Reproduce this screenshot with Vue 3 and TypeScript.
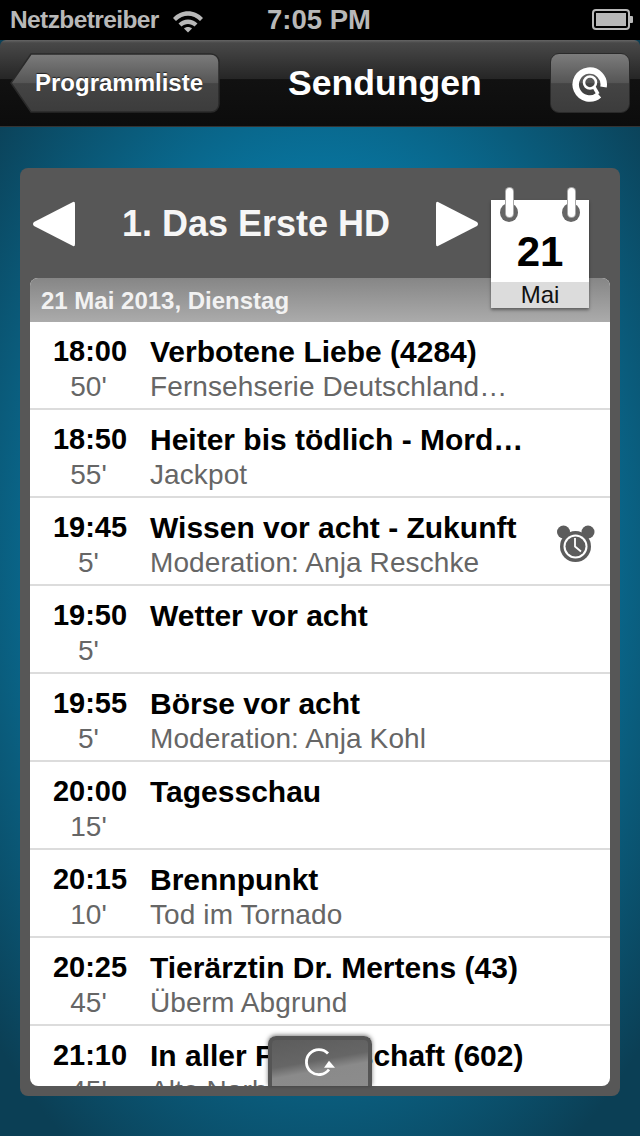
<script setup lang="ts">
interface Row { time: string; dur: string; title: string; sub: string; alarm?: boolean }
const rows: Row[] = [
  { time: '18:00', dur: "50'", title: 'Verbotene Liebe (4284)', sub: 'Fernsehserie Deutschland…' },
  { time: '18:50', dur: "55'", title: 'Heiter bis tödlich - Mord…', sub: 'Jackpot' },
  { time: '19:45', dur: "5'", title: 'Wissen vor acht - Zukunft', sub: 'Moderation: Anja Reschke', alarm: true },
  { time: '19:50', dur: "5'", title: 'Wetter vor acht', sub: '' },
  { time: '19:55', dur: "5'", title: 'Börse vor acht', sub: 'Moderation: Anja Kohl' },
  { time: '20:00', dur: "15'", title: 'Tagesschau', sub: '' },
  { time: '20:15', dur: "10'", title: 'Brennpunkt', sub: 'Tod im Tornado' },
  { time: '20:25', dur: "45'", title: 'Tierärztin Dr. Mertens (43)', sub: 'Überm Abgrund' },
  { time: '21:10', dur: "45'", title: 'In aller Freundschaft (602)', sub: 'Alte Narben' },
]
</script>

<template>
  <div class="screen">
    <header class="status">
      <div class="status-left">
        <span>Netzbetreiber</span>
        <svg class="wifi" width="32" height="24" viewBox="0 0 32 24">
          <path d="M1 9 C9 0 23 0 31 9 L28 12 C21 5 11 5 4 12 Z" fill="#b8b8b8" />
          <path d="M6.5 14.5 C12 9 20 9 25.5 14.5 L22.5 17.5 C19 14 13 14 9.5 17.5 Z" fill="#b8b8b8" />
          <path d="M12 19.5 C14 17.5 18 17.5 20 19.5 L16 23.5 Z" fill="#b8b8b8" />
        </svg>
      </div>
      <span class="clock">7:05 PM</span>
      <svg class="battery" width="42" height="22" viewBox="0 0 42 22">
        <rect x="1" y="1" width="36" height="19" rx="3" fill="none" stroke="#b8b8b8" stroke-width="2" />
        <rect x="4" y="4" width="30" height="13" fill="#b8b8b8" />
        <path d="M38 7h2a1 1 0 0 1 1 1v5a1 1 0 0 1-1 1h-2z" fill="#b8b8b8" />
      </svg>
    </header>

    <nav class="navbar">
      <button class="back">
        <svg class="back-shape" width="210" height="60" viewBox="0 0 210 60">
          <defs>
            <linearGradient id="backFill" x1="0" y1="0" x2="0" y2="1">
              <stop offset="0" stop-color="#7c7c7c" />
              <stop offset="0.5" stop-color="#555" />
              <stop offset="0.51" stop-color="#444" />
              <stop offset="1" stop-color="#3c3c3c" />
            </linearGradient>
          </defs>
          <path d="M21 1 H201 a8 8 0 0 1 8 8 V51 a8 8 0 0 1 -8 8 H21 L1 30 Z" fill="url(#backFill)" stroke="#2a2a2a" stroke-width="1.5" />
        </svg>
        <span>Programmliste</span>
      </button>
      <h1>Sendungen</h1>
      <button class="search">
        <svg width="38" height="38" viewBox="0 0 38 38">
          <path d="M28 31 A14 14 0 1 1 32.5 23" fill="none" stroke="#fff" stroke-width="6.5" />
          <circle cx="19" cy="18.5" r="6" fill="none" stroke="#fff" stroke-width="2.5" />
          <path d="M23 23 L27 30" stroke="#fff" stroke-width="3.5" />
        </svg>
      </button>
    </nav>

    <main class="content">
      <section class="panel">
        <div class="panel-head">
          <svg width="44" height="48" viewBox="0 0 44 48"><path d="M41 2 Q43 1 43 4 V44 Q43 47 41 46 L2 26 Q0 24 2 22 Z" fill="#fff" /></svg>
          <h2>1. Das Erste HD</h2>
          <svg width="44" height="48" viewBox="0 0 44 48"><path d="M3 2 Q1 1 1 4 V44 Q1 47 3 46 L42 26 Q44 24 42 22 Z" fill="#fff" /></svg>
        </div>

        <div class="list">
          <div class="day">21 Mai 2013, Dienstag</div>
          <div v-for="r in rows" :key="r.time" class="row">
            <div class="when">
              <strong>{{ r.time }}</strong>
              <span>{{ r.dur }}</span>
            </div>
            <div class="what">
              <strong>{{ r.title }}</strong>
              <span>{{ r.sub }}</span>
            </div>
            <svg v-if="r.alarm" class="alarm" width="38" height="39" viewBox="0 0 38 39">
              <circle cx="6.5" cy="8" r="6.5" fill="#5c5c5c" />
              <circle cx="31" cy="8" r="6.5" fill="#5c5c5c" />
              <circle cx="18.5" cy="22.5" r="15.5" fill="#5c5c5c" />
              <circle cx="18.5" cy="22.5" r="12" fill="#fff" />
              <circle cx="18.5" cy="22.5" r="10" fill="#5c5c5c" />
              <path d="M18 14 V22.5 L24 27.5" fill="none" stroke="#fff" stroke-width="1.8" />
            </svg>
          </div>
        </div>

        <div class="calendar">
          <div class="cal-day">21</div>
          <div class="cal-month">Mai</div>
          <span class="ring ring-a"></span>
          <span class="ring ring-b"></span>
        </div>

        <button class="refresh">
          <svg width="34" height="30" viewBox="0 0 34 30">
            <path d="M25 6.5 A12.5 12.5 0 1 0 26 22.5" fill="none" stroke="#fff" stroke-width="2.8" />
            <path d="M26 13.7 L32 20.7 L21 20.7 Z" fill="#fff" />
          </svg>
        </button>
      </section>
    </main>
  </div>
</template>

<style>
html, body { margin: 0; background: #000; }
</style>

<style scoped>
.screen {
  width: 640px;
  height: 1136px;
  overflow: hidden;
  display: flex;
  flex-direction: column;
  font-family: "Liberation Sans", Arial, sans-serif;
  background: radial-gradient(ellipse 440px 700px at 50% 50%, #0a7aa6 0%, #08749e 55%, #0a5c7c 75%, #0b3f55 100%);
}
.status {
  height: 40px;
  flex: none;
  background: #000;
  color: #b8b8b8;
  position: relative;
  display: flex;
  align-items: center;
  justify-content: space-between;
  padding: 0 4px 0 10px;
  box-sizing: border-box;
  font-size: 24.5px;
  font-weight: 700;
}
.status-left { display: flex; align-items: center; gap: 13px; letter-spacing: -0.6px; }
.clock {
  position: absolute;
  left: 267px;
  top: 2px;
  font-size: 27.5px;
  line-height: 36px;
}
.battery { margin-right: 2px; }
.wifi { margin-top: 2px; }
.navbar {
  height: 87px;
  flex: none;
  box-sizing: border-box;
  border-radius: 6px 6px 0 0;
  background: linear-gradient(#656565 0, #484848 3px, #262626 45%, #111 46%, #0c0c0c 100%);
  border-bottom: 1px solid #333;
  display: flex;
  align-items: center;
  justify-content: space-between;
  padding: 0 10px;
  position: relative;
}
.navbar h1 {
  position: absolute;
  left: 288px;
  top: 22px;
  margin: 0;
  font-size: 35.6px;
  line-height: 42px;
  font-weight: 700;
  color: #fff;
}
.back, .search {
  padding: 0;
  border: 0;
  height: 60px;
  font-family: inherit;
  cursor: pointer;
}
.back {
  width: 210px;
  background: none;
  position: relative;
  color: #fff;
  font-size: 24px;
  font-weight: 700;
  text-align: left;
}
.back-shape { position: absolute; left: 0; top: 0; }
.back span { position: relative; margin-left: 25px; text-shadow: 0 -1px 1px #222; }
.search {
  width: 80px;
  border-radius: 9px;
  border: 1.5px solid #2a2a2a;
  box-sizing: border-box;
  background: linear-gradient(#7c7c7c, #555 50%, #444 51%, #3c3c3c);
  display: flex;
  align-items: center;
  justify-content: center;
}
.content {
  flex: 1;
  min-height: 0;
  box-sizing: border-box;
  padding: 41px 20px 40px;
}
.panel {
  height: 100%;
  box-sizing: border-box;
  background: #575757;
  border-radius: 8px;
  padding: 0 10px 10px;
  display: flex;
  flex-direction: column;
  position: relative;
}
.panel-head {
  height: 110px;
  flex: none;
  box-sizing: border-box;
  padding: 32px 0 0 2px;
  display: flex;
  align-items: flex-start;
  gap: 46px;
}
.panel-head h2 {
  margin: 0;
  width: 267px;
  font-size: 36px;
  line-height: 48px;
  color: #f6f6f6;
  white-space: nowrap;
}
.list {
  flex: 1;
  min-height: 0;
  overflow: hidden;
  background: #fff;
  border-radius: 8px;
}
.day {
  height: 44px;
  box-sizing: border-box;
  padding-left: 11px;
  background: linear-gradient(#868686, #ababab);
  color: #f2f2f2;
  font-size: 24px;
  font-weight: 700;
  line-height: 45px;
}
.row {
  height: 88px;
  box-sizing: border-box;
  border-bottom: 2px solid #dcdcdc;
  display: flex;
  align-items: flex-start;
  padding-top: 12px;
  position: relative;
}
.when {
  width: 120px;
  flex: none;
  display: flex;
  flex-direction: column;
  align-items: center;
}
.when strong {
  font-size: 29px;
  line-height: 35px;
  color: #000;
  white-space: nowrap;
}
.what strong {
  font-size: 30px;
  line-height: 35px;
  color: #000;
  white-space: nowrap;
}
.when span, .what span {
  font-size: 28px;
  line-height: 35px;
  height: 35px;
  color: #666;
  white-space: nowrap;
}
.what span { letter-spacing: 0.1px; }
.when span { margin-left: -3px; }
.what { display: flex; flex-direction: column; }
.alarm { position: absolute; right: 15px; top: 26px; }
.calendar {
  position: absolute;
  z-index: 1;
  left: 471px;
  top: 32px;
  width: 98px;
  height: 108px;
  background: #fff;
  box-shadow: 0 2px 3px rgba(0, 0, 0, 0.4);
  display: flex;
  flex-direction: column;
}
.cal-day {
  height: 82px;
  box-sizing: border-box;
  padding-top: 29px;
  text-align: center;
  font-size: 42px;
  line-height: 46px;
  font-weight: 700;
  color: #000;
}
.cal-month {
  height: 26px;
  background: #dcdcdc;
  text-align: center;
  font-size: 24px;
  line-height: 25px;
  color: #111;
}
.ring {
  position: absolute;
  top: -12px;
  width: 7px;
  height: 29px;
  background: #fff;
  border-radius: 4px;
  box-shadow: 0 0 0 1px #a8a8a8;
}
.ring::before {
  content: "";
  position: absolute;
  z-index: -1;
  left: -5.5px;
  top: 15px;
  width: 18px;
  height: 19px;
  background: #666;
  border-radius: 50%;
}
.ring-a { left: 14.5px; }
.ring-b { left: 76.5px; }
.refresh {
  position: absolute;
  left: 248px;
  bottom: 10px;
  width: 104px;
  height: 50px;
  padding: 7px 0 0;
  box-sizing: border-box;
  border: 0;
  border-top: 4px solid #555;
  border-left: 4px solid #555;
  border-right: 4px solid #555;
  border-radius: 8px 8px 0 0;
  background: linear-gradient(170deg, #5c5c5c 0%, #666 45%, #8a8a8a 62%, #8c8c8c 100%);
  box-shadow: 0 -1px 4px rgba(0, 0, 0, 0.5);
  display: flex;
  align-items: flex-start;
  justify-content: center;
}
</style>
